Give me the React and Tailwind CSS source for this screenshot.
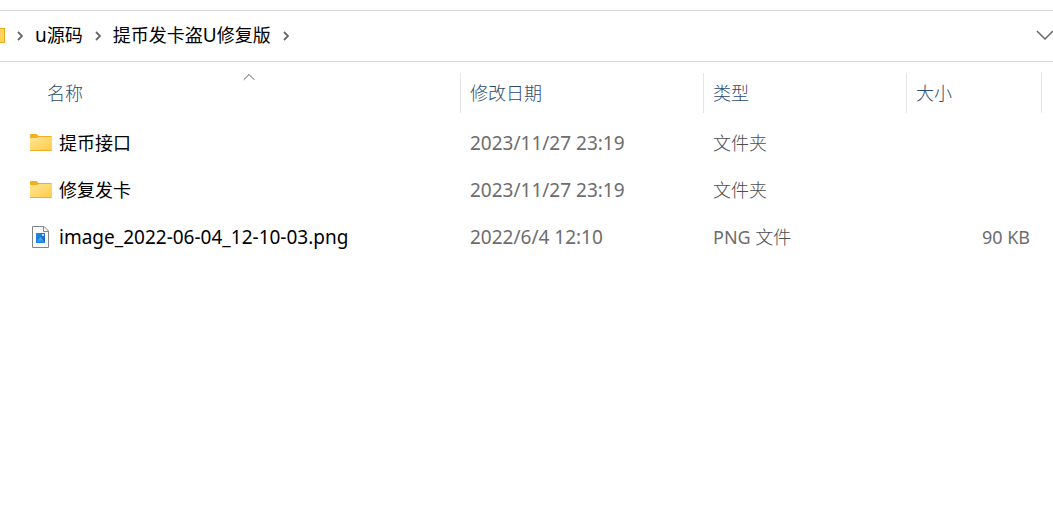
import React from "react";

// --- DATA ---
const CRUMBS = [
  { latin: "u", text: "源码", latinFirst: true },
  { text: "提币发卡盗", latin: "U", tail: "修复版" },
];

const FILES = [
  { kind: "folder", name: "提币接口", date: "2023/11/27 23:19", type: "文件夹", size: "" },
  { kind: "folder", name: "修复发卡", date: "2023/11/27 23:19", type: "文件夹", size: "" },
  {
    kind: "image",
    name: "image_2022-06-04_12-10-03.png",
    date: "2022/6/4 12:10",
    type: "文件",
    prefix: "PNG",
    size: "90 KB",
  },
];

/* ================= ICONS ================= */
function FolderIcon({ className = "" }) {
  return (
    <svg className={className} width="22" height="17" viewBox="0 0 22 17" aria-hidden="true">
      <defs>
        <linearGradient id="folderFill" x1="0" y1="0" x2="1" y2="1">
          <stop offset="0" stopColor="#ffe596" />
          <stop offset="1" stopColor="#ffcb47" />
        </linearGradient>
      </defs>
      <path d="M0 1.2Q0 0 1.2 0H6.6L8.6 2H20.8Q22 2 22 3.2V8H0Z" fill="#f2b01e" />
      <path d="M0 4H7L8.6 3H22V15.6Q22 17 20.6 17H1.4Q0 17 0 15.6Z" fill="url(#folderFill)" />
      <path d="M0.3 16.5H21.7" stroke="#edae28" />
    </svg>
  );
}

function ImageIcon({ className = "" }) {
  return (
    <svg className={className} width="18" height="22" viewBox="0 0 18 22" aria-hidden="true">
      <defs>
        <linearGradient id="imageFill" x1="0" y1="0" x2="1" y2="1">
          <stop offset="0" stopColor="#2591e4" />
          <stop offset="1" stopColor="#1456bd" />
        </linearGradient>
        <linearGradient id="peakFill" x1="0" y1="0" x2="0" y2="1">
          <stop offset="0" stopColor="#4fc0fa" />
          <stop offset="1" stopColor="#1f7fe2" />
        </linearGradient>
      </defs>
      <path d="M0.5 0.5H12L16.5 5V21.5H0.5Z" fill="#fafafa" stroke="#858585" />
      <path d="M11.5 0.5V5.5H16.5" fill="none" stroke="#858585" />
      <rect x="4" y="7" width="9" height="10" fill="url(#imageFill)" />
      <path d="M4 16L8.4 11L13 16V17H4Z" fill="url(#peakFill)" />
      <rect x="10" y="8" width="2" height="2" fill="#b9e2ff" />
    </svg>
  );
}

function CrumbArrow() {
  return (
    <svg width="6" height="10" viewBox="0 0 6 10" fill="none" aria-hidden="true">
      <path d="M1 1L5 5L1 9" stroke="#686868" strokeWidth="1.8" />
    </svg>
  );
}

/* ================= ADDRESS BAR ================= */
function AddressBar() {
  return (
    <nav
      aria-label="路径"
      className="mt-[10px] flex h-[52px] items-center overflow-hidden border-y border-[#d9d9d9] pb-[2px] text-black"
    >
      <div className="h-[15px] w-[5px] shrink-0 border-y border-r border-[#e9a921] bg-[#ffd25c]" />
      <button type="button" aria-label="展开" className="flex h-full w-[26px] shrink-0 items-center justify-center pt-[2px] pl-[3px]">
        <CrumbArrow />
      </button>
      {CRUMBS.map((crumb) => (
        <div key={crumb.text} className="flex h-full shrink-0 items-center">
          <button type="button" className="h-full pl-1 whitespace-nowrap">
            {crumb.latinFirst && <span className="text-[19px]">{crumb.latin}</span>}
            {crumb.text}
            {!crumb.latinFirst && <span className="text-[19px]">{crumb.latin}</span>}
            {crumb.tail}
          </button>
          <button type="button" aria-label="展开" className="flex h-full w-[26px] items-center justify-center pt-[2px] pl-1">
            <CrumbArrow />
          </button>
        </div>
      ))}
      <button type="button" aria-label="历史记录" className="-mr-[1px] ml-auto flex h-full shrink-0 items-center">
        <svg width="18" height="11" viewBox="0 0 18 11" fill="none" aria-hidden="true">
          <path d="M1 1L9 9L17 1" stroke="#666666" strokeWidth="1.5" />
        </svg>
      </button>
    </nav>
  );
}

/* ================= FILE LIST ================= */
function HeaderCell({ label, sorted, className = "" }) {
  return (
    <th className={`p-0 pt-[11px] pb-[6px] align-top font-light ${className}`} aria-sort={sorted ? "ascending" : undefined}>
      <button type="button" className="relative block h-10 w-full border-r border-[#e5e5e5] pl-[9px] text-left">
        {label}
        {sorted && (
          <svg
            className="absolute top-0 left-1/2 -translate-x-1/2"
            width="12"
            height="8"
            viewBox="0 0 12 8"
            fill="none"
            aria-hidden="true"
          >
            <path d="M0.7 6.8L6 1.5L11.3 6.8" stroke="#5a5a5a" />
          </svg>
        )}
      </button>
    </th>
  );
}

function FileRow({ file }) {
  const Icon = file.kind === "folder" ? FolderIcon : ImageIcon;
  return (
    <tr className="h-[47px] text-[#6d6d6d]">
      <td className="p-0 pl-[30px]">
        <div className="flex items-center text-black">
          <span className="flex w-[29px] shrink-0">
            <Icon className={file.kind === "image" ? "ml-[2px]" : ""} />
          </span>
          <span className={file.kind === "image" ? "text-[19px]" : ""}>{file.name}</span>
        </div>
      </td>
      <td className="p-0 pl-[9px] text-[19px]">{file.date}</td>
      <td className="p-0 pl-[9px]">
        {file.prefix && `${file.prefix} `}
        <span className="font-light text-[#4d4d4d]">{file.type}</span>
      </td>
      <td className="p-0 pr-3 text-right">{file.size}</td>
      <td className="p-0" />
    </tr>
  );
}

function FileList() {
  return (
    <table className="w-full table-fixed border-collapse">
      <thead>
        <tr className="text-left text-[#2f4a70]">
          <HeaderCell label="名称" sorted className="w-[461px] pl-[38px]" />
          <HeaderCell label="修改日期" className="w-[243px]" />
          <HeaderCell label="类型" className="w-[203px]" />
          <HeaderCell label="大小" className="w-[135px]" />
          <td className="p-0" />
        </tr>
      </thead>
      <tbody>
        {FILES.map((file) => (
          <FileRow key={file.name} file={file} />
        ))}
      </tbody>
    </table>
  );
}

export default function App() {
  return (
    <main className="flex min-h-screen flex-col bg-white font-['Noto_Sans','Noto_Sans_CJK_SC',sans-serif] text-[18px] leading-6">
      <AddressBar />
      <FileList />
    </main>
  );
}
